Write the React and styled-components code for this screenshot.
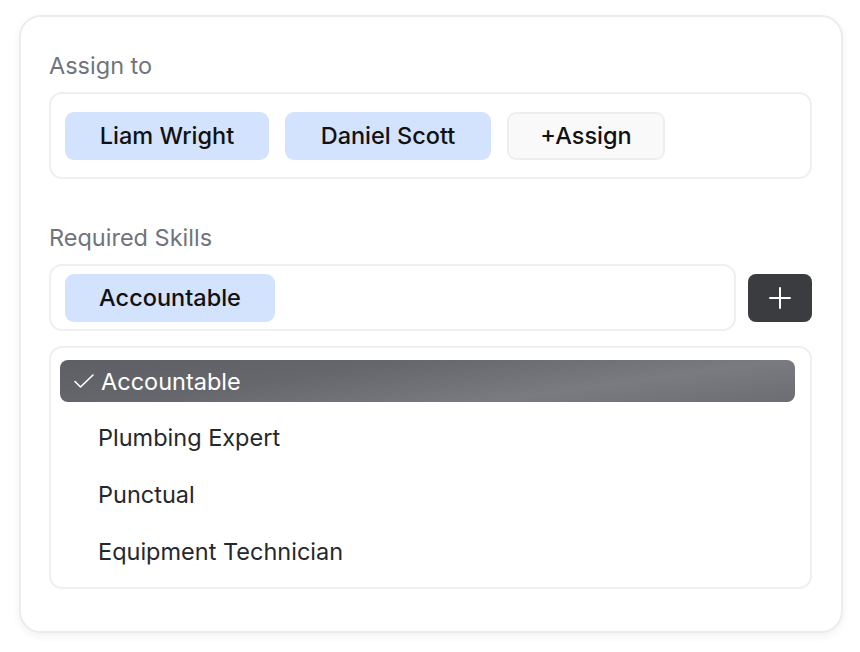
import styled, { createGlobalStyle } from 'styled-components';

const GlobalStyle = createGlobalStyle`
  body {
    margin: 0;
    background: #ffffff;
    font-family: Inter, "Noto Sans", sans-serif;
  }
`;

const skills = ['Accountable', 'Plumbing Expert', 'Punctual', 'Equipment Technician'];

const App = () => {
  return (
    <>
      <GlobalStyle />
      <Page>
        <Card>
          <Label>Assign to</Label>
          <Field>
            <Chip $w={204}>Liam Wright</Chip>
            <Chip $w={206}>Daniel Scott</Chip>
            <Chip $w={158} $ghost>+Assign</Chip>
          </Field>

          <Label $spaced>Required Skills</Label>
          <SkillRow>
            <SkillField>
              <Chip $w={210}>Accountable</Chip>
            </SkillField>
            <AddBtn aria-label="add">
              <svg width="22" height="22" viewBox="0 0 22 22">
                <path d="M11 1v20M1 11h20" stroke="#fff" strokeWidth="2" strokeLinecap="round" />
              </svg>
            </AddBtn>
          </SkillRow>

          <List>
            {skills.map((s, i) => (
              <Option key={s} $selected={i === 0}>
                {i === 0 && (
                  <svg width="22" height="16" viewBox="0 0 22 16">
                    <path d="M2 8.5l5.5 5.5L20 2" fill="none" stroke="#fff" strokeWidth="1.6" strokeLinecap="round" strokeLinejoin="round" />
                  </svg>
                )}
                {s}
              </Option>
            ))}
          </List>
        </Card>
      </Page>
    </>
  );
};

export default App;

const Page = styled.div`
  padding: 15px 17px 20px 19px;
`;

const Card = styled.div`
  width: 824px;
  height: 618px;
  box-sizing: border-box;
  border: 2px solid #ececec;
  border-radius: 22px;
  background: #fff;
  box-shadow: 0 3px 8px rgba(0, 0, 0, 0.06);
  padding: 35px 29px 0 28px;
  display: flex;
  flex-direction: column;
`;

const Label = styled.div`
  font-size: 23.5px;
  line-height: 28px;
  color: #71737c;
  margin-top: ${p => (p.$spaced ? '45px' : '0')};
  margin-bottom: 12px;
`;

const Field = styled.div`
  display: flex;
  align-items: center;
  gap: 16px;
  height: 87px;
  box-sizing: border-box;
  border: 2px solid #efefef;
  border-radius: 13px;
  padding: 0 14px;
`;

const Chip = styled.div`
  height: 48px;
  width: ${p => p.$w}px;
  box-sizing: border-box;
  display: flex;
  align-items: center;
  justify-content: center;
  border-radius: 9px;
  font-size: 23.5px;
  font-weight: 500;
  color: #111;
  background: ${p => (p.$ghost ? '#f9f9f9' : '#d3e3fd')};
  border: ${p => (p.$ghost ? '2px solid #eeeeee' : 'none')};
`;

const SkillRow = styled.div`
  display: flex;
  align-items: center;
  gap: 12px;
`;

const SkillField = styled.div`
  flex: 1;
  height: 67px;
  box-sizing: border-box;
  border: 2px solid #efefef;
  border-radius: 13px;
  padding: 0 14px;
  display: flex;
  align-items: center;
`;

const AddBtn = styled.button`
  width: 64px;
  height: 48px;
  border: none;
  border-radius: 8px;
  background: #3b3c40;
  display: flex;
  align-items: center;
  justify-content: center;
  padding: 0;
`;

const List = styled.div`
  margin-top: 15px;
  border: 2px solid #efefef;
  border-radius: 13px;
  padding: 12px 15px 14px 9px;
  display: flex;
  flex-direction: column;
  gap: 13px;
`;

const Option = styled.div`
  height: ${p => (p.$selected ? '42px' : '44px')};
  display: flex;
  align-items: center;
  gap: 6px;
  border-radius: 8px;
  font-size: 23.5px;
  color: ${p => (p.$selected ? '#fff' : '#26272b')};
  padding-left: ${p => (p.$selected ? '13px' : '38px')};
  background: ${p =>
    p.$selected
      ? 'linear-gradient(172deg, #5e5f64 0%, #66676c 35%, #7a7b81 70%, #6c6d72 100%)'
      : 'transparent'};
`;
